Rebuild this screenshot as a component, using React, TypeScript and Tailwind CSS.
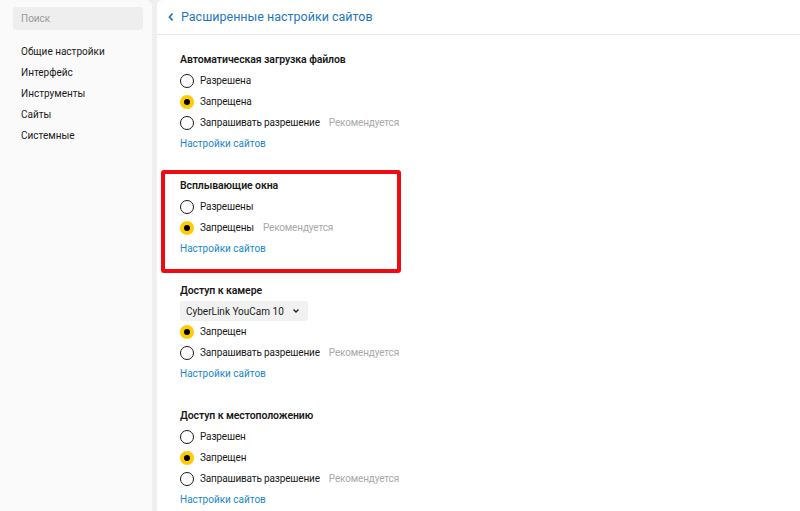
import React from 'react';

type Option = { label: string; checked?: boolean; hint?: string };

interface Section {
  id: string;
  title: string;
  select?: string;
  options: Option[];
  highlight?: boolean;
}

const navItems = ['Общие настройки', 'Интерфейс', 'Инструменты', 'Сайты', 'Системные'];

const sections: Section[] = [
  {
    id: 'downloads',
    title: 'Автоматическая загрузка файлов',
    options: [
      { label: 'Разрешена' },
      { label: 'Запрещена', checked: true },
      { label: 'Запрашивать разрешение', hint: 'Рекомендуется' },
    ],
  },
  {
    id: 'popups',
    title: 'Всплывающие окна',
    highlight: true,
    options: [
      { label: 'Разрешены' },
      { label: 'Запрещены', checked: true, hint: 'Рекомендуется' },
    ],
  },
  {
    id: 'camera',
    title: 'Доступ к камере',
    select: 'CyberLink YouCam 10',
    options: [
      { label: 'Запрещен', checked: true },
      { label: 'Запрашивать разрешение', hint: 'Рекомендуется' },
    ],
  },
  {
    id: 'location',
    title: 'Доступ к местоположению',
    options: [
      { label: 'Разрешен' },
      { label: 'Запрещен', checked: true },
      { label: 'Запрашивать разрешение', hint: 'Рекомендуется' },
    ],
  },
];

function Radio({ checked }: { checked?: boolean }) {
  if (checked) {
    return (
      <span className="flex h-[14px] w-[14px] shrink-0 items-center justify-center rounded-full bg-[#ffcc00]">
        <span className="h-[6px] w-[6px] rounded-full bg-black" />
      </span>
    );
  }
  return <span className="h-[14px] w-[14px] shrink-0 rounded-full border-[1.5px] border-[#1a1a1a] bg-white" />;
}

function SettingsSection({ section }: { section: Section }) {
  return (
    <div className="relative flex flex-col">
      {section.highlight && (
        <div className="pointer-events-none absolute left-[-19px] top-[-5.5px] h-[103px] w-[240px] rounded-[3px] border-[4px] border-[#ee0a10]" />
      )}
      <div className="flex h-[21px] items-center text-[10.5px] font-semibold tracking-[-0.1px] text-[#1a1a1a]">
        {section.title}
      </div>
      {section.select && (
        <div className="flex h-[20px] items-start">
          <div className="flex h-[20px] w-[128px] items-center justify-between whitespace-nowrap rounded-[3px] bg-[#f1f1f1] pl-[6px] pr-[8px] text-[10px] text-[#1a1a1a]">
            <span>{section.select}</span>
            <svg width="8" height="6" viewBox="0 0 8 6" fill="none">
              <path d="M1.5 1.5 L4 4 L6.5 1.5" stroke="#222" strokeWidth="1.4" />
            </svg>
          </div>
        </div>
      )}
      {section.options.map((opt) => (
        <div
          key={opt.label}
          className="flex h-[21px] items-center gap-[6px] whitespace-nowrap text-[10px] tracking-[-0.15px] text-[#1a1a1a]"
        >
          <Radio checked={opt.checked} />
          <span>{opt.label}</span>
          {opt.hint && <span className="ml-[3px] text-[#a8a8a8]">{opt.hint}</span>}
        </div>
      ))}
      <div className="flex h-[21px] items-center text-[10px] text-[#1a87cc]">Настройки сайтов</div>
    </div>
  );
}

export default function App() {
  return (
    <div
      className="flex h-[511px] w-[800px] gap-[5px] overflow-hidden bg-[#efefef]"
      style={{ fontFamily: 'Roboto, "Noto Sans", sans-serif' }}
    >
      <aside className="flex w-[152px] shrink-0 flex-col rounded-tr-[6px] bg-[#fafafa] pl-[13px] pr-[9px] pt-[7px]">
        <div className="flex h-[23px] items-center rounded-[3px] bg-[#eeeeee] pl-[8px] text-[10px] text-[#9a9a9a]">
          Поиск
        </div>
        <nav className="mt-[11px] flex flex-col pl-[8px]">
          {navItems.map((item) => (
            <div key={item} className="flex h-[21px] items-center text-[10px] text-[#1a1a1a]">
              {item}
            </div>
          ))}
        </nav>
      </aside>

      <main className="flex flex-1 flex-col rounded-tl-[6px] bg-white">
        <header className="flex h-[35px] shrink-0 items-center gap-[6px] border-b border-[#e6e6e6] pl-[10px] text-[12.5px] text-[#1e78bd]">
          <svg width="8" height="10" viewBox="0 0 8 10" fill="none">
            <path d="M5.5 1.5 L2.5 5 L5.5 8.5" stroke="#1e78bd" strokeWidth="1.8" />
          </svg>
          <span>Расширенные настройки сайтов</span>
        </header>
        <div className="flex flex-col gap-[21px] pl-[23px] pt-[14px]">
          {sections.map((s) => (
            <SettingsSection key={s.id} section={s} />
          ))}
        </div>
      </main>
    </div>
  );
}
